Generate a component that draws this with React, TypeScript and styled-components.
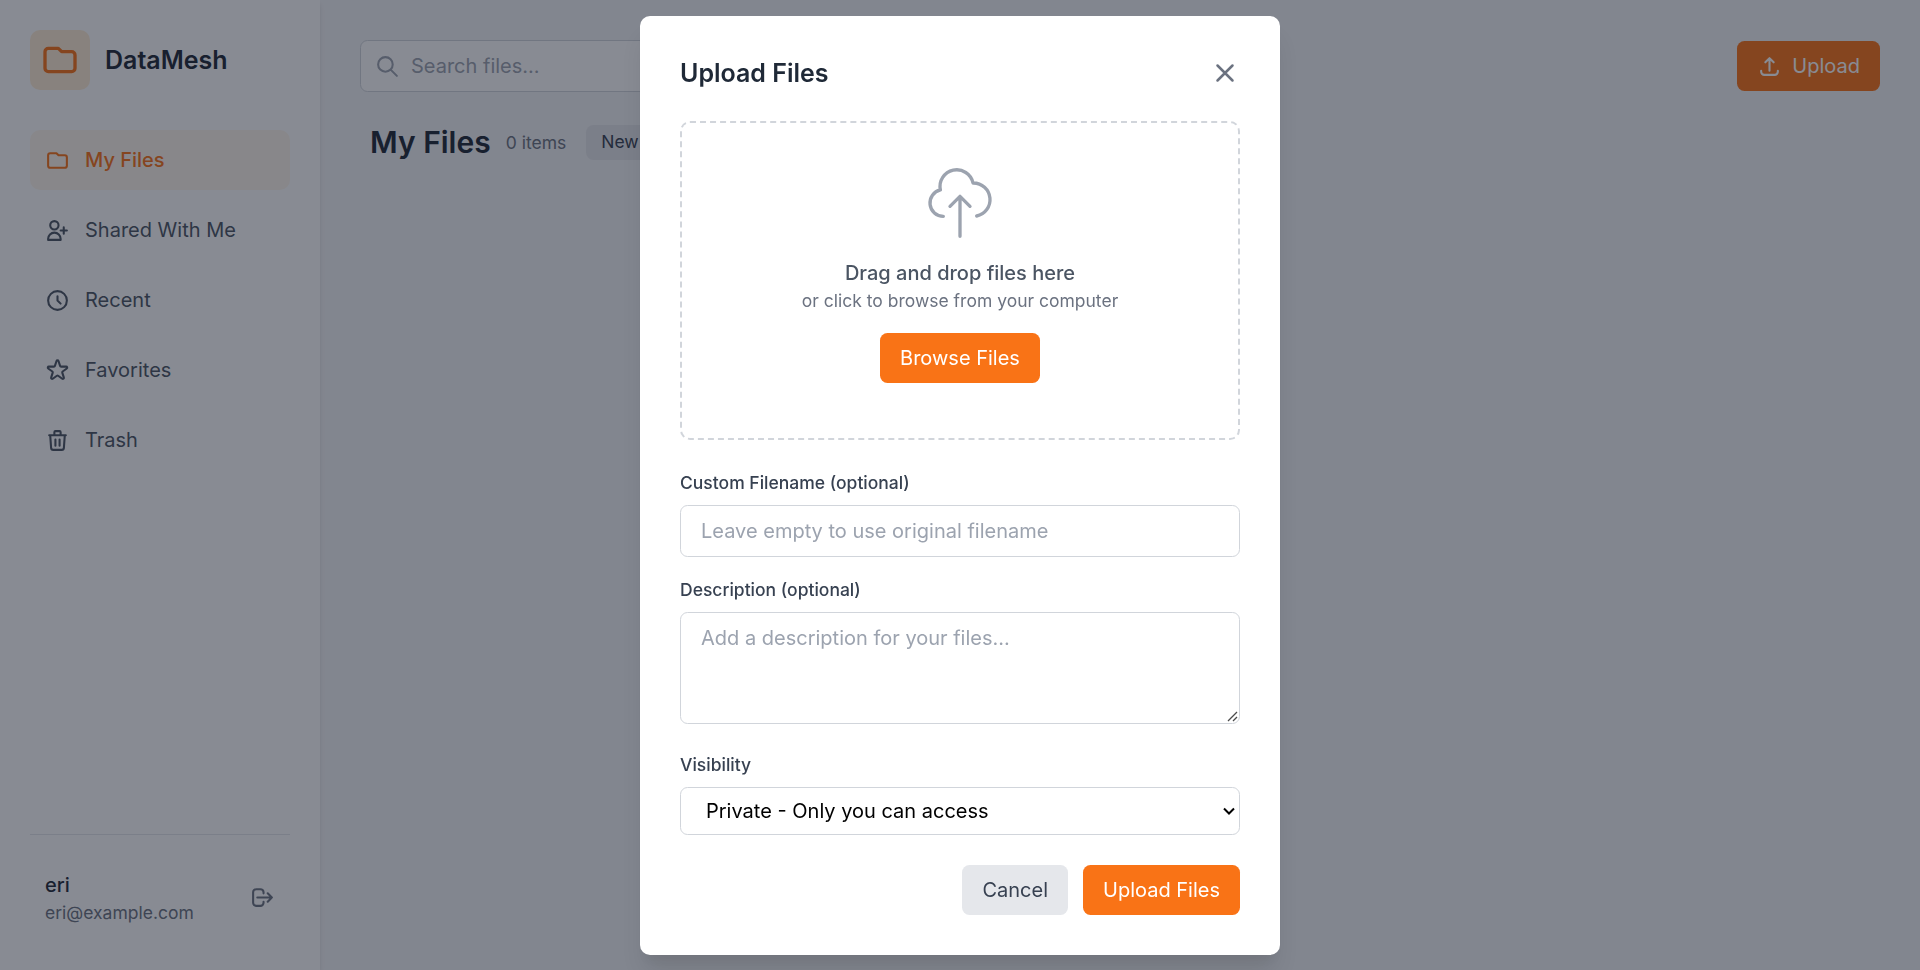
import React from "react";
import styled, { createGlobalStyle, css } from "styled-components";

const GlobalStyle = createGlobalStyle`
  *, *::before, *::after { box-sizing: border-box; }
  html { font-size: 20px; }
  body {
    margin: 0;
    font-family: Inter, "Liberation Sans", sans-serif;
    line-height: 1.5;
    color: #1f2937;
    overflow: hidden;
  }
  h1, h2, p { margin: 0; }
  button, input, textarea, select { font: inherit; margin: 0; }
`;

const Page = styled.div`
  display: flex;
  height: 100vh;
  background: #f3f4f6;
`;

const Sidebar = styled.aside`
  z-index: 1;
  display: flex;
  flex-direction: column;
  flex: 0 0 320px;
  padding: 30px;
  background: #fff;
  box-shadow: 0 4px 6px -1px rgba(0, 0, 0, 0.1), 0 2px 4px -1px rgba(0, 0, 0, 0.06);
`;

const Brand = styled.div`
  display: flex;
  align-items: center;
  gap: 15px;
  margin-bottom: 40px;
`;

const BrandMark = styled.div`
  display: grid;
  place-items: center;
  width: 60px;
  height: 60px;
  border-radius: 10px;
  background: #ffedd5;
  color: #f97316;
`;

const BrandName = styled.span`
  font-size: 25px;
  line-height: 35px;
  font-weight: 600;
`;

const Nav = styled.nav`
  display: flex;
  flex-direction: column;
  gap: 10px;
  flex: 1;
`;

const NavItem = styled.a<{ $active?: boolean }>`
  display: flex;
  align-items: center;
  gap: 15px;
  height: 60px;
  padding: 0 15px;
  border-radius: 10px;
  font-size: 20px;
  color: #4b5563;
  ${(p) => p.$active && css`
    background: #fff7ed;
    color: #f97316;
    font-weight: 500;
  `}
`;

const Account = styled.div`
  display: flex;
  align-items: center;
  justify-content: space-between;
  padding: 35px 15px 15px;
  border-top: 1px solid #e5e7eb;
  color: #6b7280;
`;

const AccountName = styled.p`
  font-size: 20px;
  line-height: 30px;
  font-weight: 500;
  color: #1f2937;
`;

const AccountMail = styled.p`
  font-size: 17.5px;
  line-height: 25px;
`;

const Main = styled.main`
  flex: 1;
  padding: 40px;
`;

const TopBar = styled.header`
  display: flex;
  align-items: center;
  justify-content: space-between;
`;

const SearchBox = styled.label`
  display: flex;
  align-items: center;
  gap: 11px;
  width: 480px;
  height: 52px;
  padding: 0 14px;
  border: 1px solid #d1d5db;
  border-radius: 7.5px;
  background: #fff;
  color: #9ca3af;
`;

const SearchInput = styled.input`
  flex: 1;
  min-width: 0;
  padding: 0;
  border: 0;
  background: none;
  &::placeholder { color: #9ca3af; }
`;

const Button = styled.button<{ $muted?: boolean }>`
  display: inline-flex;
  align-items: center;
  gap: 10px;
  height: 50px;
  padding: 0 20px;
  border: 0;
  border-radius: 7.5px;
  font-size: 20px;
  background: ${(p) => (p.$muted ? "#e5e7eb" : "#f97316")};
  color: ${(p) => (p.$muted ? "#374151" : "#fff")};
`;

const Heading = styled.div`
  display: flex;
  align-items: center;
  margin-top: 30px;
  padding-left: 10px;
`;

const Title = styled.h1`
  font-size: 30px;
  line-height: 40px;
  font-weight: 600;
`;

const Count = styled.span`
  margin: 0 20px 0 15px;
  font-size: 17.5px;
  line-height: 25px;
  color: #6b7280;
`;

const FolderButton = styled.button`
  height: 35px;
  padding: 0 15px;
  border: 0;
  border-radius: 7.5px;
  background: #e5e7eb;
  color: #374151;
  font-size: 17.5px;
`;

const Overlay = styled.div`
  position: fixed;
  inset: 0;
  z-index: 10;
  display: flex;
  align-items: center;
  justify-content: center;
  background: rgba(17, 24, 39, 0.5);
`;

const Modal = styled.section`
  width: 640px;
  padding: 40px;
  border-radius: 10px;
  background: #fff;
  box-shadow: 0 20px 25px -5px rgba(0, 0, 0, 0.1), 0 10px 10px -5px rgba(0, 0, 0, 0.04);
`;

const ModalHeader = styled.div`
  display: flex;
  align-items: center;
  justify-content: space-between;
  margin-bottom: 30px;
`;

const ModalTitle = styled.h2`
  font-size: 25px;
  line-height: 35px;
  font-weight: 600;
`;

const CloseButton = styled.button`
  display: flex;
  padding: 0;
  border: 0;
  background: none;
  color: #6b7280;
`;

const DropZone = styled.div`
  display: flex;
  flex-direction: column;
  align-items: center;
  height: 319px;
  padding: 40px;
  margin-bottom: 30px;
  border: 2px dashed #d1d5db;
  border-radius: 10px;
  color: #9ca3af;
`;

const DropTitle = styled.p`
  margin-top: 15px;
  font-size: 20px;
  line-height: 30px;
  font-weight: 500;
  color: #4b5563;
`;

const DropHint = styled.p`
  margin-bottom: 20px;
  font-size: 17.5px;
  line-height: 25px;
  color: #6b7280;
`;

const Field = styled.div<{ $gap: number }>`
  display: flex;
  flex-direction: column;
  gap: 10px;
  margin-bottom: ${(p) => p.$gap}px;
`;

const Label = styled.label`
  font-size: 17.5px;
  line-height: 25px;
  font-weight: 500;
  color: #374151;
`;

const control = css`
  display: block;
  width: 100%;
  border: 1px solid #d1d5db;
  border-radius: 7.5px;
  background: #fff;
  &::placeholder { color: #9ca3af; opacity: 1; }
`;

const TextInput = styled.input`
  ${control}
  height: 52px;
  padding: 10px 20px;
`;

const TextArea = styled.textarea`
  ${control}
  height: 112px;
  padding: 10px 20px;
  resize: none;
`;

const Select = styled.select`
  ${control}
  appearance: none;
  height: 48px;
  padding: 8px 25px;
  color: #000;
`;

const ControlFrame = styled.div`
  position: relative;
`;

const Chevron = styled.svg`
  position: absolute;
  top: 20px;
  right: 5px;
  pointer-events: none;
`;

const Grip = styled.svg`
  position: absolute;
  right: 2px;
  bottom: 2px;
  pointer-events: none;
`;

const Actions = styled.div`
  display: flex;
  justify-content: flex-end;
  gap: 15px;
`;

const shapes = {
  folder: "M3 7v10a2 2 0 002 2h14a2 2 0 002-2V9a2 2 0 00-2-2h-6l-2-2H5a2 2 0 00-2 2z",
  userPlus: "M18 9v3m0 0v3m0-3h3m-3 0h-3m-2-5a4 4 0 11-8 0 4 4 0 018 0zM3 20a6 6 0 0112 0v1H3v-1z",
  clock: "M12 8v4l3 3m6-3a9 9 0 11-18 0 9 9 0 0118 0z",
  star: "M11.049 2.927c.3-.921 1.603-.921 1.902 0l1.519 4.674a1 1 0 00.95.69h4.915c.969 0 1.371 1.24.588 1.81l-3.976 2.888a1 1 0 00-.363 1.118l1.518 4.674c.3.922-.755 1.688-1.538 1.118l-3.976-2.888a1 1 0 00-1.176 0l-3.976 2.888c-.783.57-1.838-.197-1.538-1.118l1.518-4.674a1 1 0 00-.363-1.118l-3.976-2.888c-.784-.57-.38-1.81.588-1.81h4.914a1 1 0 00.951-.69l1.519-4.674z",
  trash: "M19 7l-.867 12.142A2 2 0 0116.138 21H7.862a2 2 0 01-1.995-1.858L5 7m5 4v6m4-6v6m1-10V4a1 1 0 00-1-1h-4a1 1 0 00-1 1v3M4 7h16",
  logout: "M17 16l4-4m0 0l-4-4m4 4H7m6 4v1a3 3 0 01-3 3H6a3 3 0 01-3-3V7a3 3 0 013-3h4a3 3 0 013 3v1",
  upload: "M4 16v1a3 3 0 003 3h10a3 3 0 003-3v-1m-4-8l-4-4m0 0L8 8m4-4v12",
  search: "M21 21l-6-6m2-5a7 7 0 11-14 0 7 7 0 0114 0z",
  cloud: "M7 16a4 4 0 01-.88-7.903A5 5 0 1115.9 6L16 6a5 5 0 011 9.9M15 13l-3-3m0 0l-3 3m3-3v12",
  close: "M6 18L18 6M6 6l12 12",
};

type IconProps = { name: keyof typeof shapes; size: number; weight?: number };

const Icon = ({ name, size, weight = 2 }: IconProps) => (
  <svg width={size} height={size} viewBox="0 0 24 24" fill="none" stroke="currentColor"
    strokeWidth={weight} strokeLinecap="round" strokeLinejoin="round" aria-hidden="true">
    <path d={shapes[name]} />
  </svg>
);

export default function App() {
  return (
    <>
      <GlobalStyle />
      <Page>
        <Sidebar>
          <Brand>
            <BrandMark><Icon name="folder" size={40} /></BrandMark>
            <BrandName>DataMesh</BrandName>
          </Brand>
          <Nav>
            <NavItem $active><Icon name="folder" size={25} />My Files</NavItem>
            <NavItem><Icon name="userPlus" size={25} />Shared With Me</NavItem>
            <NavItem><Icon name="clock" size={25} />Recent</NavItem>
            <NavItem><Icon name="star" size={25} />Favorites</NavItem>
            <NavItem><Icon name="trash" size={25} />Trash</NavItem>
          </Nav>
          <Account>
            <div>
              <AccountName>eri</AccountName>
              <AccountMail>eri@example.com</AccountMail>
            </div>
            <Icon name="logout" size={25} />
          </Account>
        </Sidebar>
        <Main>
          <TopBar>
            <SearchBox>
              <Icon name="search" size={25} />
              <SearchInput placeholder="Search files..." />
            </SearchBox>
            <Button><Icon name="upload" size={25} />Upload</Button>
          </TopBar>
          <Heading>
            <Title>My Files</Title>
            <Count>0 items</Count>
            <FolderButton>New Folder</FolderButton>
          </Heading>
        </Main>
      </Page>
      <Overlay>
        <Modal>
          <ModalHeader>
            <ModalTitle>Upload Files</ModalTitle>
            <CloseButton aria-label="Close"><Icon name="close" size={30} /></CloseButton>
          </ModalHeader>
          <DropZone>
            <Icon name="cloud" size={80} weight={1} />
            <DropTitle>Drag and drop files here</DropTitle>
            <DropHint>or click to browse from your computer</DropHint>
            <Button>Browse Files</Button>
          </DropZone>
          <Field $gap={20}>
            <Label>Custom Filename (optional)</Label>
            <TextInput placeholder="Leave empty to use original filename" />
          </Field>
          <Field $gap={28}>
            <Label>Description (optional)</Label>
            <ControlFrame>
              <TextArea placeholder="Add a description for your files..." />
              <Grip width="11" height="11" viewBox="0 0 11 11" fill="none" stroke="#4a4a4a" strokeWidth="1.3">
                <path d="M1 10L10 1M6 10L10 6" />
              </Grip>
            </ControlFrame>
          </Field>
          <Field $gap={30}>
            <Label>Visibility</Label>
            <ControlFrame>
              <Select defaultValue="private">
                <option value="private">Private - Only you can access</option>
              </Select>
              <Chevron width="12" height="9" viewBox="0 0 12 9" fill="none" stroke="#000" strokeWidth="2">
                <path d="M1 1.500l5 5 5-5" />
              </Chevron>
            </ControlFrame>
          </Field>
          <Actions>
            <Button $muted>Cancel</Button>
            <Button>Upload Files</Button>
          </Actions>
        </Modal>
      </Overlay>
    </>
  );
}
